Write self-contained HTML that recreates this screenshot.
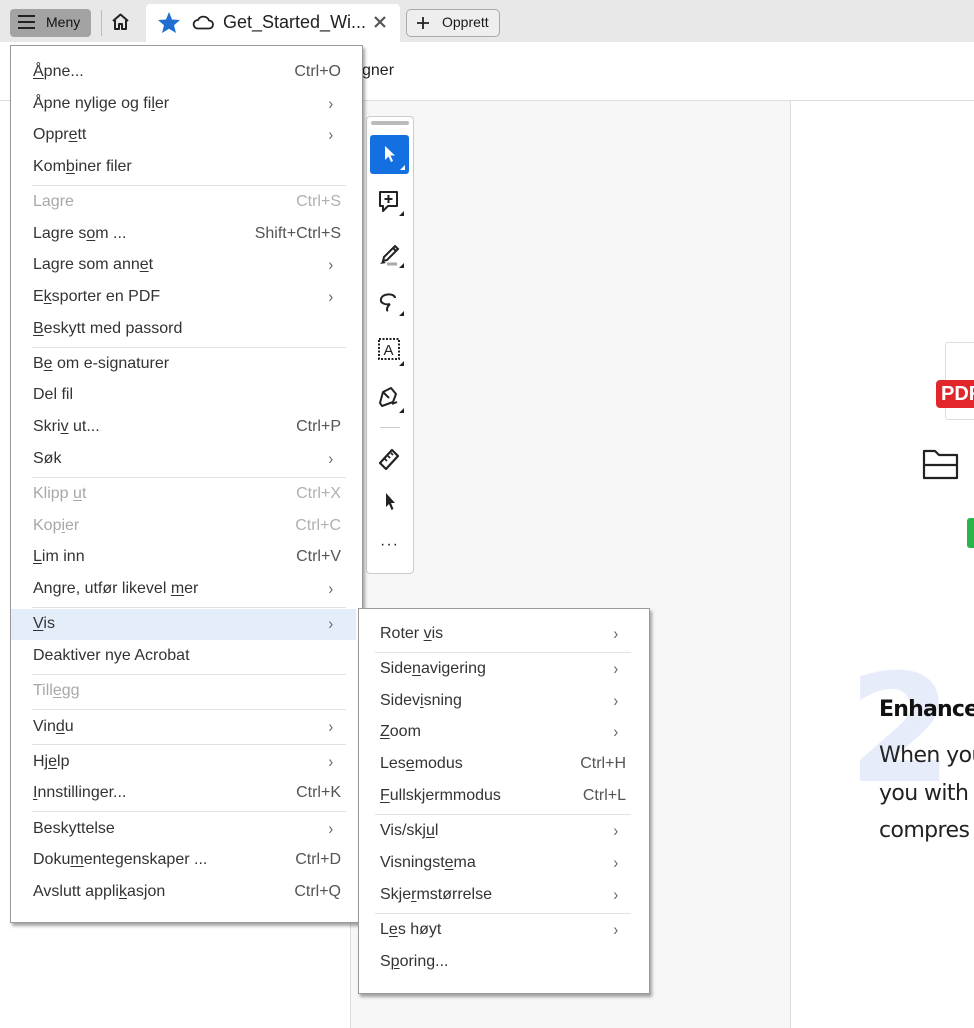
<!DOCTYPE html>
<html><head><meta charset="utf-8"><style>
*{margin:0;padding:0;box-sizing:border-box}
body{width:974px;height:1028px;position:relative;overflow:hidden;background:#fff;font-family:"Liberation Sans",Arial,sans-serif;color:#2c2c2c}
.a{position:absolute}
.it{position:absolute;height:22px;line-height:22px;font-size:16px;color:#333;white-space:nowrap}
.dis{color:#a8a8a8}
.sc{position:absolute;height:22px;line-height:22px;font-size:16px;color:#555;text-align:right;white-space:nowrap}
.sc.dis{color:#b0b0b0}
.ch{position:absolute;font-size:17px;color:#666;height:22px;line-height:22px;transform:scaleX(.85)}
.sep{position:absolute;height:1px;background:#e2e2e2}
u{text-decoration:underline;text-underline-offset:2px;text-decoration-thickness:1px}
</style></head><body>
<!-- top bar -->
<div class="a" style="left:0;top:0;width:974px;height:42px;background:#e8e8e8"></div>
<div class="a" style="left:10px;top:9px;width:81px;height:28px;background:#a3a3a3;border-radius:4px"></div>
<div class="a" style="left:18px;top:15px;width:17px;height:2px;background:#222;box-shadow:0 6px 0 #222,0 12px 0 #222"></div>
<div class="a" style="left:46px;top:14px;font-size:14px;color:#111">Meny</div>
<div class="a" style="left:101px;top:10px;width:1px;height:26px;background:#bbb"></div>
<svg class="a" style="left:110px;top:12px" width="21" height="20" viewBox="0 0 21 20"><path d="M3 9 L10.5 2.5 L18 9 M5 8 V17 H9 V12 H12 V17 H16 V8" fill="none" stroke="#222" stroke-width="2" stroke-linejoin="round"/></svg>
<div class="a" style="left:146px;top:4px;width:254px;height:38px;background:#fff;border-radius:4px 4px 0 0"></div>
<svg class="a" style="left:157px;top:11px" width="24" height="23" viewBox="0 0 24 23"><path d="M12 1 L15 8.5 L23 9 L17 14.2 L19 22 L12 17.8 L5 22 L7 14.2 L1 9 L9 8.5Z" fill="#1f6fd0"/></svg>
<svg class="a" style="left:192px;top:15px" width="22" height="15" viewBox="0 0 22 15"><path d="M5 13.5 H17 A4 4 0 0 0 17 5.5 A6 6 0 0 0 6 5 A4.3 4.3 0 0 0 5 13.5Z" fill="none" stroke="#222" stroke-width="1.8"/></svg>
<div class="a" style="left:223px;top:12px;font-size:18px;color:#222">Get_Started_Wi...</div>
<svg class="a" style="left:373px;top:15px" width="14" height="14"><path d="M2 2 L12 12 M12 2 L2 12" stroke="#555" stroke-width="2.2"/></svg>
<div class="a" style="left:406px;top:9px;width:94px;height:28px;border:1px solid #aaa;border-radius:5px;background:#eee"></div>
<svg class="a" style="left:416px;top:16px" width="14" height="14"><path d="M7 1 V13 M1 7 H13" stroke="#222" stroke-width="1.8"/></svg>
<div class="a" style="left:442px;top:14px;font-size:14px;color:#1a1a1a">Opprett</div>
<div class="a" style="left:0;top:42px;width:974px;height:58px;background:#fff"></div>
<div class="a" style="left:362px;top:62px;font-size:16px;color:#222">gner</div>
<div class="a" style="left:0;top:100px;width:974px;height:1px;background:#ddd"></div>
<!-- page area -->
<div class="a" style="left:350px;top:101px;width:440px;height:927px;background:#f7f7f7;border-left:1px solid #ddd"></div>
<div class="a" style="left:790px;top:101px;width:1px;height:927px;background:#ddd"></div>
<!-- tool bar -->
<div class="a" style="left:366px;top:116px;width:48px;height:458px;background:#fff;border:1px solid #ccc;border-radius:4px"></div>
<div class="a" style="left:371px;top:121px;width:38px;height:4px;background:#bbb;border-radius:2px"></div>
<div class="a" style="left:370px;top:135px;width:39px;height:39px;background:#1470e0;border-radius:3px"></div>
<svg class="a" style="left:370px;top:135px" width="39" height="39"><path d="M15 11 V25 L18.5 21.5 L21 27 L23 26 L20.5 20.5 L25 20.5Z" fill="#fff"/><path d="M35 30 V35 H30Z" fill="#fff"/></svg>
<svg class="a" style="left:370px;top:188px" width="39" height="32"><path d="M10 4 H27 V18 H18 L13 23 V18 H10Z" fill="none" stroke="#222" stroke-width="2" stroke-linejoin="round"/><path d="M18.5 7 V15 M14.5 11 H22.5" stroke="#222" stroke-width="2"/><path d="M34 23 V28 H29Z" fill="#222"/></svg>
<svg class="a" style="left:370px;top:237px" width="39" height="32"><path d="M14 20 L25 9 L28 12 L17 23 L13 24Z M23 11 L26 14" fill="none" stroke="#222" stroke-width="2"/><path d="M10 27 L13 24 L16 26Z" fill="#222"/><path d="M17 27 H27" stroke="#aaa" stroke-width="3"/><path d="M34 26 V31 H29Z" fill="#222"/></svg>
<svg class="a" style="left:370px;top:285px" width="39" height="32"><path d="M25 13 C25 8 12 8 11 14 C10 19 17 20 20 19 M20 19 C17 22 16 25 18 26" fill="none" stroke="#222" stroke-width="2"/><path d="M34 26 V31 H29Z" fill="#222"/></svg>
<svg class="a" style="left:370px;top:334px" width="39" height="32"><rect x="9" y="5" width="20" height="20" fill="none" stroke="#222" stroke-width="2" stroke-dasharray="2 1.5"/><text x="13.5" y="21" font-size="15" font-family="Liberation Sans" fill="#222">A</text><path d="M34 27 V32 H29Z" fill="#222"/></svg>
<svg class="a" style="left:370px;top:383px" width="39" height="32"><path d="M10 20 L13 9 L21 5 L26 11 L23 19 L12 23Z M13 9 L19 15" fill="none" stroke="#222" stroke-width="2" stroke-linejoin="round"/><path d="M22 21 L27 19" stroke="#222" stroke-width="2"/><path d="M34 25 V30 H29Z" fill="#222"/></svg>
<div class="a" style="left:380px;top:427px;width:20px;height:1px;background:#ccc"></div>
<svg class="a" style="left:370px;top:443px" width="39" height="30"><path d="M10 20 L22 7 L28 13 L16 26Z" fill="none" stroke="#222" stroke-width="2.2" stroke-linejoin="round"/><path d="M15 16 L17 18 M18 13 L20 15 M21 10 L23 12" stroke="#222" stroke-width="1.6"/></svg>
<svg class="a" style="left:370px;top:488px" width="39" height="28"><path d="M16 5 V19 L19 16 L21.5 22 L23.5 21 L21 15 L25 15Z" fill="#222"/></svg>
<div class="a" style="left:380px;top:536px;font-size:16px;color:#222;letter-spacing:1px">···</div>
<!-- right page content -->
<div class="a" style="left:945px;top:342px;width:40px;height:78px;border:1px solid #ddd;border-radius:3px;background:#fff"></div>
<div class="a" style="left:936px;top:380px;width:50px;height:28px;background:#e2272c;border-radius:4px;color:#fff;font-weight:bold;font-size:20px;line-height:28px;padding-left:5px">PDF</div>
<svg class="a" style="left:921px;top:447px" width="40" height="36"><path d="M3 4 H14 L18 8 H36 V31 H3Z M3 18 H36" fill="none" stroke="#222" stroke-width="2.2" stroke-linejoin="round"/></svg>
<div class="a" style="left:967px;top:518px;width:12px;height:30px;background:#2ab548;border-radius:3px"></div>
<div class="a" style="left:848px;top:655px;font-size:150px;line-height:150px;font-weight:bold;color:#e6ecfa;font-family:'DejaVu Sans',sans-serif">2</div>
<div class="a" style="left:879px;top:697px;font-size:22px;font-weight:bold;color:#111;font-family:'DejaVu Sans',sans-serif;letter-spacing:-.8px">Enhance</div>
<div class="a" style="left:879px;top:737px;font-size:22px;line-height:37.5px;color:#222;font-family:'DejaVu Sans',sans-serif;letter-spacing:-.6px;white-space:nowrap">When you<br>you with<br>compres</div>
<!-- main menu -->
<div class="a" style="left:10px;top:45px;width:353px;height:878px;background:#fff;border:1px solid #9a9a9a;box-shadow:2px 3px 3px rgba(0,0,0,.35)"></div>
<div class="a" style="left:11px;top:609px;width:345px;height:31px;background:#e3eefa"></div>
<div class="it" style="left:33px;top:61px"><u>Å</u>pne...</div><div class="sc" style="right:633px;top:61px">Ctrl+O</div>
<div class="it" style="left:33px;top:93px">Åpne nylige og fi<u>l</u>er</div><div class="ch" style="left:328px;top:93px">›</div>
<div class="it" style="left:33px;top:124px">Oppr<u>e</u>tt</div><div class="ch" style="left:328px;top:124px">›</div>
<div class="it" style="left:33px;top:156px">Kom<u>b</u>iner filer</div>
<div class="sep" style="left:32px;top:185px;width:314px"></div>
<div class="it dis" style="left:33px;top:191px">Lagre</div><div class="sc dis" style="right:633px;top:191px">Ctrl+S</div>
<div class="it" style="left:33px;top:223px">Lagre s<u>o</u>m ...</div><div class="sc" style="right:633px;top:223px">Shift+Ctrl+S</div>
<div class="it" style="left:33px;top:254px">Lagre som ann<u>e</u>t</div><div class="ch" style="left:328px;top:254px">›</div>
<div class="it" style="left:33px;top:286px">E<u>k</u>sporter en PDF</div><div class="ch" style="left:328px;top:286px">›</div>
<div class="it" style="left:33px;top:318px"><u>B</u>eskytt med passord</div>
<div class="sep" style="left:32px;top:347px;width:314px"></div>
<div class="it" style="left:33px;top:353px">B<u>e</u> om e-signaturer</div>
<div class="it" style="left:33px;top:384px">Del fil</div>
<div class="it" style="left:33px;top:416px">Skri<u>v</u> ut...</div><div class="sc" style="right:633px;top:416px">Ctrl+P</div>
<div class="it" style="left:33px;top:448px">Søk</div><div class="ch" style="left:328px;top:448px">›</div>
<div class="sep" style="left:32px;top:477px;width:314px"></div>
<div class="it dis" style="left:33px;top:483px">Klipp <u>u</u>t</div><div class="sc dis" style="right:633px;top:483px">Ctrl+X</div>
<div class="it dis" style="left:33px;top:515px">Kop<u>i</u>er</div><div class="sc dis" style="right:633px;top:515px">Ctrl+C</div>
<div class="it" style="left:33px;top:546px"><u>L</u>im inn</div><div class="sc" style="right:633px;top:546px">Ctrl+V</div>
<div class="it" style="left:33px;top:578px">Angre, utfør likevel <u>m</u>er</div><div class="ch" style="left:328px;top:578px">›</div>
<div class="sep" style="left:32px;top:607px;width:314px"></div>
<div class="it" style="left:33px;top:613px"><u>V</u>is</div><div class="ch" style="left:328px;top:613px">›</div>
<div class="it" style="left:33px;top:645px">Deaktiver nye Acrobat</div>
<div class="sep" style="left:32px;top:674px;width:314px"></div>
<div class="it dis" style="left:33px;top:680px">Till<u>e</u>gg</div>
<div class="sep" style="left:32px;top:709px;width:314px"></div>
<div class="it" style="left:33px;top:716px">Vin<u>d</u>u</div><div class="ch" style="left:328px;top:716px">›</div>
<div class="sep" style="left:32px;top:744px;width:314px"></div>
<div class="it" style="left:33px;top:751px">Hj<u>e</u>lp</div><div class="ch" style="left:328px;top:751px">›</div>
<div class="it" style="left:33px;top:782px"><u>I</u>nnstillinger...</div><div class="sc" style="right:633px;top:782px">Ctrl+K</div>
<div class="sep" style="left:32px;top:811px;width:314px"></div>
<div class="it" style="left:33px;top:818px">Beskyttelse</div><div class="ch" style="left:328px;top:818px">›</div>
<div class="it" style="left:33px;top:849px">Doku<u>m</u>entegenskaper ...</div><div class="sc" style="right:633px;top:849px">Ctrl+D</div>
<div class="it" style="left:33px;top:881px">Avslutt appli<u>k</u>asjon</div><div class="sc" style="right:633px;top:881px">Ctrl+Q</div>
<!-- submenu -->
<div class="a" style="left:358px;top:608px;width:292px;height:386px;background:#fff;border:1px solid #9a9a9a;box-shadow:2px 3px 3px rgba(0,0,0,.35)"></div>
<div class="it" style="left:380px;top:623px">Roter <u>v</u>is</div><div class="ch" style="left:613px;top:623px">›</div>
<div class="sep" style="left:375px;top:652px;width:256px"></div>
<div class="it" style="left:380px;top:658px">Side<u>n</u>avigering</div><div class="ch" style="left:613px;top:658px">›</div>
<div class="it" style="left:380px;top:690px">Sidev<u>i</u>sning</div><div class="ch" style="left:613px;top:690px">›</div>
<div class="it" style="left:380px;top:721px"><u>Z</u>oom</div><div class="ch" style="left:613px;top:721px">›</div>
<div class="it" style="left:380px;top:753px">Les<u>e</u>modus</div><div class="sc" style="right:348px;top:753px">Ctrl+H</div>
<div class="it" style="left:380px;top:785px"><u>F</u>ullskjermmodus</div><div class="sc" style="right:348px;top:785px">Ctrl+L</div>
<div class="sep" style="left:375px;top:814px;width:256px"></div>
<div class="it" style="left:380px;top:820px">Vis/skj<u>u</u>l</div><div class="ch" style="left:613px;top:820px">›</div>
<div class="it" style="left:380px;top:852px">Visningst<u>e</u>ma</div><div class="ch" style="left:613px;top:852px">›</div>
<div class="it" style="left:380px;top:884px">Skje<u>r</u>mstørrelse</div><div class="ch" style="left:613px;top:884px">›</div>
<div class="sep" style="left:375px;top:913px;width:256px"></div>
<div class="it" style="left:380px;top:919px">L<u>e</u>s høyt</div><div class="ch" style="left:613px;top:919px">›</div>
<div class="it" style="left:380px;top:951px">S<u>p</u>oring...</div>
</body></html>
